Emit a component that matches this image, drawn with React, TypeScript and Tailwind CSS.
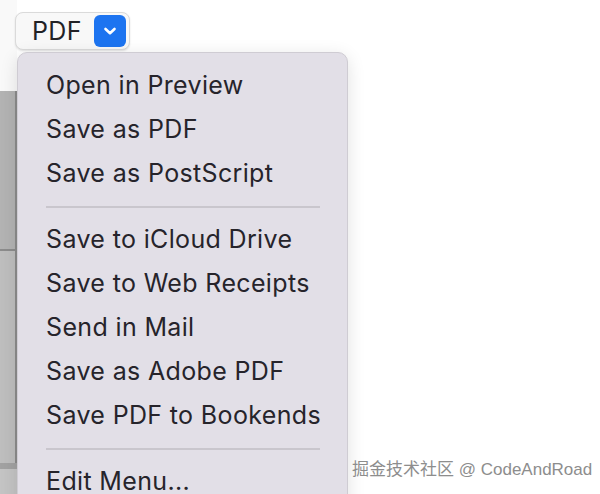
import React from 'react'

const groups = [
  ['Open in Preview', 'Save as PDF', 'Save as PostScript'],
  ['Save to iCloud Drive', 'Save to Web Receipts', 'Send in Mail', 'Save as Adobe PDF', 'Save PDF to Bookends'],
  ['Edit Menu...'],
]

const App = () => {
  return (
    <div className="relative h-[494px] w-[600px] overflow-hidden bg-white font-['Inter','Noto_Sans',sans-serif]">
      {/* window behind the menu */}
      <div className="flex h-full w-[17px] flex-col">
        <div className="h-[91px] bg-[#f9f9f9]" />
        <div className="h-[160px] border-r-2 border-b-2 border-[#8c8c8c] bg-[#b3b3b3]" />
        <div className="h-[212px] border-r-2 border-[#8c8c8c] bg-[#bebebe]" />
        <div className="h-[6px] bg-[#a2a2a2]" />
        <div className="flex-1 bg-[#c4c4c4]" />
      </div>

      {/* popup button */}
      <div className="absolute left-[15px] top-[12px] flex h-[38px] w-[115px] items-center rounded-[8px] border border-[#dadada] bg-[#f8f8f8] pl-[16px] pr-[3px] shadow-[0_1px_2px_rgba(0,0,0,0.12)]">
        <span className="text-[25px] leading-none tracking-[0.4px] text-[#222226]">PDF</span>
        <div className="ml-auto flex h-[32px] w-[32px] items-center justify-center rounded-[6px] bg-[#1d74f0]">
          <svg width="14" height="10" viewBox="0 0 14 10" fill="none">
            <path d="M2.5 3 L7 7.2 L11.5 3" stroke="white" strokeWidth="2.6" strokeLinecap="round" strokeLinejoin="round" />
          </svg>
        </div>
      </div>

      {/* dropdown menu */}
      <div className="absolute left-[17px] top-[52px] w-[331px] rounded-t-[10px] border border-[#cfccd3] bg-[#e2dfe7] pt-[11px] pb-[20px] shadow-[0_4px_18px_rgba(0,0,0,0.12)]">
        {groups.map((g, gi) => (
          <div key={gi}>
            {gi > 0 && (
              <div className="flex h-[22px] items-center pl-[28px] pr-[27px]">
                <div className="h-[2px] w-full bg-[#c9c6cd]" />
              </div>
            )}
            {g.map((item) => (
              <div key={item} className="flex h-[44px] items-center whitespace-nowrap pl-[28px] text-[25px] tracking-[0.35px] text-[#26242b]">
                {item}
              </div>
            ))}
          </div>
        ))}
      </div>

      {/* watermark */}
      <div className="absolute left-[352px] top-[457px] whitespace-nowrap font-['Liberation_Sans','Noto_Sans_CJK_SC',sans-serif] text-[17px] leading-[26px] text-[#8d8d8d] [text-shadow:0_0_2px_#fff]">
        掘金技术社区 @ CodeAndRoad
      </div>
    </div>
  )
}

export default App
